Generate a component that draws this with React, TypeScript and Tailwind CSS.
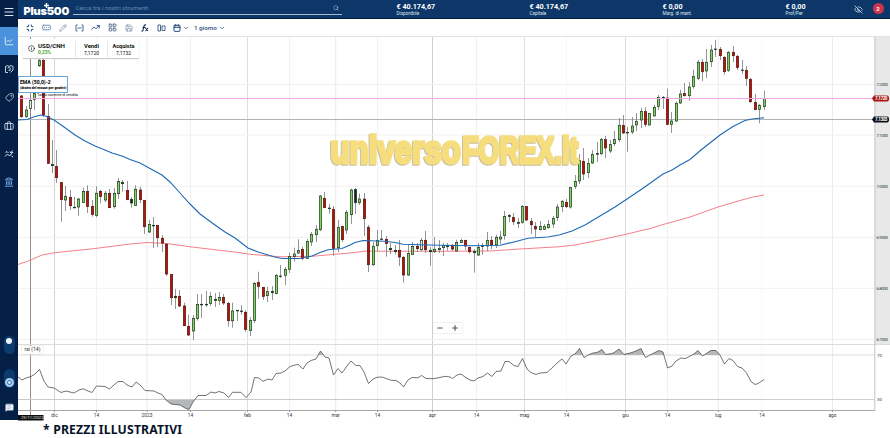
import type { FC } from 'react';
import {
  Briefcase,
  Calendar,
  ChartLine,
  ChevronDown,
  EyeOff,
  Info,
  Landmark,
  LayoutGrid,
  Menu,
  MessageSquareText,
  Minimize,
  Minus,
  Pencil,
  Plus,
  RectangleEllipsis,
  Save,
  Search,
  Tag,
  TrendingUp,
} from 'lucide-react';

// high, body top, body bottom, low, kind (g = up, r = down, k = flat, h = hollow)
type Candle = [number, number, number, number, string];

const candles: Candle[] = [
  [95, 95.7, 117, 118, 'r'], [106, 109.7, 116.7, 118, 'g'], [97, 100.3, 108.7, 118, 'h'], [85, 93.3, 99.7, 110, 'g'],
  [58, 60, 66, 67, 'g'], [55, 60, 115, 117, 'r'], [104, 116, 163.7, 164, 'r'], [140, 164, 166, 173, 'k'],
  [150, 166.3, 178, 183, 'r'], [182, 182.3, 200, 221.7, 'r'], [186, 196, 200.3, 211, 'g'], [190, 197, 206, 210, 'r'],
  [197, 207, 208, 208, 'k'], [198, 198.7, 207.3, 215.7, 'g'], [187.7, 191.3, 202.7, 203, 'g'], [185.3, 191.3, 206.7, 213, 'r'],
  [200, 206.3, 214.7, 216.7, 'r'], [186.3, 193, 215.7, 217.3, 'g'], [190, 191, 196.7, 203.3, 'r'], [191, 193, 200.3, 202, 'g'],
  [189, 193, 208, 208, 'r'], [188, 193, 207, 208.7, 'g'], [178, 181.3, 194, 198.7, 'g'], [180, 182, 184, 191.7, 'k'],
  [181, 190.3, 200, 200, 'r'], [197, 199, 203.3, 207.7, 'k'], [185.3, 189, 205.7, 206, 'g'], [186.7, 189.7, 200, 203, 'r'],
  [200, 200, 227, 234, 'r'], [220, 224.3, 232.3, 233, 'g'], [217, 225, 226, 248, 'k'], [225, 225, 238, 247, 'r'],
  [235, 238, 243.3, 252, 'r'], [243, 244, 274.3, 276, 'r'], [274, 274.3, 298, 305, 'r'], [289, 296, 298, 309, 'k'],
  [290, 296, 306.3, 307, 'r'], [302.7, 305.7, 326, 326, 'r'], [314.7, 326, 335.3, 336, 'r'], [315, 318, 331.3, 340, 'g'],
  [294, 304.3, 318.7, 320.7, 'g'], [294, 304, 305, 318, 'k'], [291, 304, 305, 307, 'k'], [292, 296, 303.7, 306, 'g'],
  [293, 299, 300.7, 307, 'k'], [292, 297.3, 300.7, 305, 'g'], [294, 297.3, 303.3, 305, 'r'], [302, 303.3, 321, 326.7, 'r'],
  [302.7, 310.7, 321, 327.7, 'g'], [310, 310, 311, 321, 'k'], [305, 310.7, 311.7, 314.7, 'k'], [310, 312, 329.7, 331.7, 'r'],
  [317, 320.3, 330.7, 336, 'g'], [282, 283.3, 320.7, 323, 'g'], [271.7, 282, 286.7, 298.7, 'r'], [287, 287, 296.7, 300, 'r'],
  [286.7, 291.3, 296, 302, 'g'], [286, 291, 293, 300, 'k'], [274, 275.3, 294, 294, 'g'], [265, 275.7, 276.7, 278, 'k'],
  [267, 269, 275.7, 285, 'g'], [252.7, 256.3, 269.7, 273, 'g'], [247.7, 253.7, 257, 261.7, 'g'], [239.3, 250.3, 253.3, 254, 'g'],
  [246.7, 249, 258.7, 260, 'r'], [239, 241.3, 258.7, 259, 'g'], [232, 234, 242.3, 246, 'g'], [225, 229.3, 235, 242, 'g'],
  [195, 195.7, 230, 231, 'g'], [192, 198, 208, 208, 'r'], [204, 207.7, 209, 213.7, 'k'], [206, 209, 248.7, 255.7, 'r'],
  [220, 227, 248, 252, 'g'], [226, 226, 240, 242, 'r'], [210, 212, 230.3, 234, 'g'], [188.7, 189.7, 215, 224, 'g'],
  [188, 189.3, 203, 214, 'k'], [193.7, 198.7, 203, 205, 'g'], [193, 198.7, 219, 236, 'r'], [225, 227, 265, 272, 'r'],
  [242, 246, 265, 266, 'g'], [230, 240, 246, 251, 'g'], [230, 238.7, 239.7, 240, 'k'], [236, 239, 243.7, 256.7, 'r'],
  [243, 248, 250, 254, 'k'], [245, 250, 252, 254.7, 'k'], [240, 250, 257.3, 266, 'r'], [256, 257.3, 275.3, 282.7, 'r'],
  [245, 253.3, 275.3, 276, 'g'], [242, 246, 254.7, 255, 'g'], [243, 246, 249, 252, 'r'], [238, 240, 250, 251, 'h'],
  [231, 240, 250, 253, 'r'], [247, 250, 252, 266, 'k'], [237, 249, 252, 253, 'g'], [240, 248, 250, 253, 'g'],
  [243, 245.3, 248, 256, 'g'], [243, 245.3, 247, 250.7, 'k'], [244, 245, 249.3, 251, 'r'], [239.7, 242.3, 251.3, 252, 'g'],
  [238.7, 240.3, 242.7, 243, 'g'], [239.7, 240.3, 246.3, 250, 'r'], [247, 247, 252, 253.7, 'r'], [249, 251.3, 253, 272.7, 'k'],
  [243, 247, 255.3, 256, 'g'], [243, 245.3, 246.7, 254.7, 'k'], [232, 240, 246.3, 251, 'g'], [236, 240, 245, 249, 'r'],
  [234.7, 237, 245.3, 248, 'g'], [231, 236.7, 239.3, 244, 'g'], [211, 216.3, 235.7, 239.7, 'g'], [214, 215.3, 216.7, 222, 'k'],
  [213, 217.3, 222, 225, 'r'], [218, 222, 223.7, 228, 'k'], [205, 206.3, 222.7, 223.7, 'g'], [206, 206.3, 220.3, 221, 'r'],
  [218, 221, 225, 234, 'r'], [222, 226, 229.3, 237, 'r'], [221, 226, 230, 230.5, 'g'], [224, 226.3, 229.7, 230, 'g'],
  [220, 224.3, 228, 228.5, 'g'], [216, 218, 224.3, 228, 'g'], [204, 206.7, 218, 221, 'g'], [200, 201, 207, 212, 'g'],
  [199, 202, 207, 208, 'r'], [187, 187.3, 207.3, 208.5, 'g'], [175, 181.3, 186.7, 189, 'g'], [154, 160.3, 181.3, 184, 'g'],
  [148, 161, 174.3, 180, 'r'], [158, 163.3, 173, 178, 'g'], [150, 154, 163.3, 164, 'g'], [142, 153.3, 154.3, 162, 'k'],
  [138, 139.3, 154, 155, 'g'], [136, 139.3, 148.3, 158, 'r'], [140, 144.3, 151.3, 153, 'g'], [131, 139.3, 144, 146, 'g'],
  [118, 125, 140, 142, 'g'], [115, 125.3, 133.3, 134, 'r'], [127, 132, 133.3, 151.7, 'k'], [117, 125.7, 132.3, 134, 'g'],
  [113, 121, 125.3, 131, 'g'], [108, 111.3, 120.3, 128, 'g'], [107, 111.3, 124.7, 127, 'r'], [113, 113.3, 125.3, 125.5, 'g'],
  [104.7, 107, 116.3, 116.5, 'g'], [95, 97, 106.7, 110, 'g'], [96, 97, 98, 109, 'k'], [88.7, 97.7, 124.7, 125, 'r'],
  [112, 120.7, 124.7, 133, 'g'], [101.7, 103, 121.3, 122, 'g'], [89.7, 93.7, 103.3, 104, 'g'], [83, 93.3, 96, 96.5, 'r'],
  [82, 86.7, 96, 101, 'g'], [69.7, 76, 86.7, 88.7, 'g'], [60, 62, 78.7, 80, 'g'], [59, 62, 72, 81, 'r'],
  [49, 62, 71.3, 78, 'g'], [45, 49.7, 62, 67, 'g'], [40, 48.7, 49.7, 57, 'k'], [47, 49, 56, 60, 'r'],
  [56, 57, 72, 74.7, 'r'], [51, 52, 70.7, 72, 'g'], [46, 52, 56, 62, 'r'], [55, 56, 67.7, 70, 'r'],
  [60, 69.7, 70.7, 74, 'k'], [66, 70, 78.7, 86, 'r'], [78, 79, 102, 103, 'r'], [93.7, 102, 110, 110, 'r'],
  [104, 105, 109.7, 123.3, 'g'], [90.7, 98.3, 107, 110, 'g'],
];

const fills: Record<string, string> = { g: '#83d45f', r: '#b01505', k: '#1c1f26', h: '#e8efe6' };

const emaFast =
  '18,120 27,119.5 35,116.5 41,115 47,116.5 54,120 64,127 75,135 85,141 95,146 105,150 112,153 122,156 130,159.5 140,163 150,168.5 162,175 170,182 180,193 190,204 200,214 215,225 225,232 235,238 248,248 258,252 268,255 275,257 282,258.5 300,258.5 312,256 320,252.5 328,249.7 342,248.5 350,245 355,242.5 363,240.5 385,241.3 395,242.5 403,244.3 420,244.7 440,245.3 472,245.7 500,245.3 515,241.7 528,238.3 548,237 560,234.7 572,231 585,225 600,216 615,207 627,199 643,188.3 663,174 672,170 680,165 690,159.5 701,150 720,135 733,126.5 745,120.5 752,119 764,117.7';

const emaSlow =
  '18,264.5 30,260.3 42,255 55,252.7 95,248.5 130,244 147,242.5 168,243.7 192,247 240,252.7 250,254.3 280,256.8 312,256.3 335,254.3 355,252.5 366,251 380,251.2 440,251.3 490,251 520,249 560,246.7 575,245 600,240 625,234.5 650,228.5 665,224 690,217 718,207 740,200.5 753,197 764,195';

const rsi =
  '18,377 22,380 26,378 31,376.5 35,374 39.5,369.5 44,381 48,387 54,388 61,392.5 66,391 74,393 79,390 83,388.7 88,391 92,392.5 96.5,386 105,386.5 109.5,389 118,381.5 123,381.5 127,385 132,387 136,382 140,385 145,390.5 154,391 158,393 162,394.5 166,400 171,404 180,405 185,408 189,409.5 193,402 198,395.5 206,395.5 211,392 215,393 219,391.5 224,393 228.5,397.5 232.5,392.3 241,392.3 246,397.5 251,392 254.5,377.5 259,378 263,381.3 268,379 272,380 276,373.5 281,373 285,371 290,366.5 298,364.3 303,369 307,363 311,360.5 316,359 320.5,351 325,357 329,358 333.5,375 338,368.5 342,373 347,366 351,361 356,365.5 360,365.5 364,372 368.5,383.5 373,379 377,377.3 382,377 391,380.3 396,380.5 400,383 403.5,387 408,380 412,377.5 418,377.7 421.5,375.5 426,378.5 433,378.7 439,377.7 445,376.3 450,377 452.5,378.5 457,375 461,374 465,377 470,380 474,381 478,378 483,376.5 487.5,373 492,376.5 496,371.5 501,371 505,361.5 509,361.5 514,365.5 518,366.5 522.5,358.5 527,369 531,372.5 536,374.5 540,373 547,372.5 553,367 557,363 562,359 566,364 571,356 575,354 579.5,348.5 584,357.5 588,355 593,353 597,352.5 602,349.5 605.5,354.5 612,353.5 615,352 619,349 624,354.5 632,352.5 637,350.5 641,348.5 645.5,357.5 650,355 654,353 659,350.5 663,352 667.5,368 672,366 676,361 681,358 685,358.7 694,354 698,350.5 702.5,356 711,350.5 716,350.5 720,355 724.5,364 729,358.5 733,360.5 737.5,366.5 742,368 746.5,373 751,381.5 755,384.5 758,383.5 764,379.5';

const months: [number, string, string][] = [
  [54.5, 'dic', '#d4d4d4'], [96.5, '14', '#f1f1f1'], [147, '2023', '#ebebeb'], [190.5, '14', '#f1f1f1'],
  [247.5, 'feb', '#dedede'], [289.5, '14', '#f1f1f1'], [335.7, 'mar', '#ebebeb'], [377.5, '14', '#f1f1f1'],
  [432.5, 'apr', '#cfcfcf'], [476.5, '14', '#f1f1f1'], [524.5, 'mag', '#dedede'], [566.5, '14', '#f6f6f6'],
  [625.5, 'giu', '#dedede'], [667.5, '14', '#f1f1f1'], [718.3, 'lug', '#ebebeb'], [762, '14', '#f9f9f9'],
  [832.5, 'ago', '#ebebeb'],
];

const prices: [number, string][] = [
  [84.5, '7.2000'], [135, '7.1000'], [186.3, '7.0000'], [237.3, '6.9000'], [288.3, '6.8000'], [339.5, '6.7000'],
];

const stats: [string, string, string][] = [
  ['€ 40.174,67', 'Disponibile', 'w-[133px]'],
  ['€ 40.174,67', 'Capitale', 'w-[133px]'],
  ['€ 0,00', 'Marg. di mant.', 'w-[123px]'],
  ['€ 0,00', 'Prof/Per', 'w-[68px]'],
];

const Sidebar: FC = () => (
  <nav className="flex h-[420px] w-[18px] shrink-0 flex-col items-center bg-[#042047] text-[#d7e3f1]">
    <div className="flex h-[27px] w-full items-center justify-center pb-1">
      <Menu size={12} strokeWidth={2} />
    </div>
    <div className="flex h-7 w-full items-center justify-center bg-[#4b92dc] text-white">
      <ChartLine size={10} strokeWidth={1.8} />
    </div>
    <div className="flex h-7 items-center">
      <svg width="10" height="10" viewBox="0 0 20 20" fill="none" stroke="currentColor" strokeWidth="1.8">
        <path d="M8 17H3V5l4-2 3 2 4-2 4 2v7l-5 5M7 8l3-1 3 2-2 4M13 12l-2 2-2-2" />
      </svg>
    </div>
    <div className="flex h-7 items-center">
      <Tag size={9} className="rotate-90" />
    </div>
    <div className="flex h-[29px] items-center">
      <Briefcase size={10} />
    </div>
    <div className="flex h-7 items-center">
      <svg width="10" height="10" viewBox="0 0 20 20" fill="none" stroke="currentColor" strokeWidth="2">
        <path d="M2 15l5-5 4 4 7-8M3 7l3-2 3 3M12 5l2 3 3-5M15 14l3 2" />
      </svg>
    </div>
    <div className="flex h-7 items-center text-[#6fa8e6]">
      <Landmark size={10} strokeWidth={2.4} />
    </div>
    <div className="mt-auto flex h-[18px] w-[11px] justify-center rounded-full bg-[#0c3b70] pt-[2px]">
      <span className="h-[6px] w-[6px] rounded-full bg-[#f2f6fa]" />
    </div>
    <div className="mt-[15px] flex h-[19px] w-[11px] items-end justify-center rounded-full bg-[#0c3b70] pb-px">
      <span className="flex h-[9px] w-[9px] items-center justify-center rounded-full bg-[#a9cdf0]">
        <span className="h-[5px] w-[5px] rounded-full border border-[#2d6cae] bg-[#d8e8f6]" />
      </span>
    </div>
    <div className="mt-[15px] mb-[8px]">
      <MessageSquareText size={9} fill="#fff" stroke="#9fb6d0" />
    </div>
  </nav>
);

const Header: FC = () => (
  <header className="flex h-[19px] shrink-0 items-start border-b border-[#05183a] bg-[#0c3768] text-white">
    <div className="relative ml-[5.5px] w-[49px] pt-[4px]">
      <span className="block font-[Inter] text-[11px] leading-[14px] font-black tracking-[-0.22px]">Plus500</span>
      <svg className="absolute top-[3px] left-[20px]" width="5" height="5" viewBox="0 0 5 5">
        <path d="M2.5 0v5M0 2.5h5" stroke="#fff" strokeWidth="1.4" />
      </svg>
    </div>
    <div className="flex h-[15px] w-[269px] items-center justify-between border-b border-[#a9bccb] pt-[2px] pr-[3px] pl-[3px]">
      <span className="text-[6.2px] leading-[8px] text-[#6389ab]">Cerca tra i nostri strumenti</span>
      <Search size={6} className="text-[#c4d3e2]" />
    </div>
    <div className="ml-[55px] flex pt-[2px]">
      {stats.map(([value, label, width]) => (
        <div key={label} className={width}>
          <div className="text-[7.2px] leading-[9px] font-bold">{value}</div>
          <div className="text-[4.6px] leading-[5px] text-[#dfe8f1]">{label}</div>
        </div>
      ))}
    </div>
    <EyeOff size={9} className="mt-[5px] text-[#d7e3f1]" />
    <span className="mt-[3px] ml-[10px] flex h-[11px] w-[11px] items-center justify-center rounded-full bg-[#d0334f] text-[6px] leading-none font-bold">
      2
    </span>
  </header>
);

const Toolbar: FC = () => (
  <div className="flex h-[18px] shrink-0 items-center border-b border-[#e2e2e2] bg-white pl-[4px] text-[#1f4a7d] [&>span]:flex [&>span]:w-[16.4px] [&>span]:justify-center">
    <span>
      <Minimize size={8} strokeWidth={3} />
    </span>
    <span>
      <RectangleEllipsis size={9} stroke="#5b83ae" strokeWidth={2.4} />
    </span>
    <span>
      <Pencil size={8} stroke="#6b84a0" />
    </span>
    <span>
      <svg width="9" height="8" viewBox="0 0 18 16" fill="none" stroke="#46688f" strokeWidth="2">
        <path d="M5 2H2v12h3M13 2h3v12h-3M5 10l3-3 2 2 3-3" />
      </svg>
    </span>
    <span>
      <TrendingUp size={9} strokeWidth={2.4} />
    </span>
    <span>
      <LayoutGrid size={9} stroke="#4c6787" strokeWidth={2.4} />
    </span>
    <span>
      <Save size={8} stroke="#6b84a0" />
    </span>
    <span>
      <svg width="8" height="8" viewBox="0 0 16 16" fill="none" stroke="#0a2c5a" strokeWidth="2.2">
        <path d="M1 14c3 1 3-1 4-6s2-7 5-6M3 7h6M9 8l5 6M14 8l-5 6" />
      </svg>
    </span>
    <span>
      <svg width="9" height="8" viewBox="0 0 18 16" fill="none" stroke="#46688f" strokeWidth="2">
        <path d="M2 2h5v12H2zM10 4h6v9h-6z" />
      </svg>
    </span>
    <div className="ml-[3px] flex items-center gap-[2px]">
      <Calendar size={8} strokeWidth={3} />
      <ChevronDown size={6} strokeWidth={3} />
    </div>
    <div className="ml-[5.5px] flex items-center gap-[2px]">
      <span className="text-[6.2px] leading-[8px] font-medium">1 giorno</span>
      <ChevronDown size={6} strokeWidth={3} />
    </div>
  </div>
);

const Chart: FC = () => (
  <svg width="872" height="384" viewBox="18 37 872 384" className="block">
    <defs>
      <clipPath id="over">
        <rect x="18" y="340" width="760" height="15" />
      </clipPath>
      <clipPath id="under">
        <rect x="18" y="399.5" width="760" height="11" />
      </clipPath>
    </defs>

    {/* Grid */}
    {months.map(([x, , color]) => (
      <path key={x} d={`M${x} 37V410`} stroke={color} />
    ))}
    {prices.map(([y]) => (
      <path key={y} d={`M18 ${y}H874`} stroke="#f1f1f1" />
    ))}
    <path d="M30.5 37V415" stroke="#8f8f8f" />
    <path d="M18 344.5H890M18 355H874" stroke="#dcdcdc" />
    <path d="M18 399.5H874" stroke="#d0d0d0" />
    <path d="M18 410.5H875" stroke="#a8a8a8" />

    <polyline points={emaSlow} fill="none" stroke="#f4808a" strokeWidth="1" />
    <path d="M18 119.5H873" stroke="#b3b3b3" />

    {/* Candles */}
    {candles.map(([high, top, bottom, low, kind], i) => {
      const x = Math.floor(21.8 + i * 4.392) + 0.5;
      return (
        <g key={i}>
          <path d={`M${x} ${high}V${low}`} stroke="#77797c" strokeWidth="0.8" />
          <rect
            x={x - 1.15}
            y={top + 0.3}
            width="2.3"
            height={Math.max(bottom - top - 0.6, 0.6)}
            fill={fills[kind]}
            stroke={kind === 'r' ? '#5a1512' : '#1d3a20'}
            strokeWidth="0.7"
          />
        </g>
      );
    })}
    <polyline points={emaFast} fill="none" stroke="#1d69b5" strokeWidth="1.1" />
    <path d="M18 98.5H873" stroke="#f3a6e6" />

    {/* RSI */}
    <polygon points={`18,355 ${rsi} 764,355`} fill="#b4b8b8" clipPath="url(#over)" />
    <polygon points={`18,399.5 ${rsi} 764,399.5`} fill="#b4b8b8" clipPath="url(#under)" />
    <polyline points={rsi} fill="none" stroke="#4c4f52" strokeWidth="0.8" />

    {/* Watermark */}
    <g
      fontFamily="Liberation Sans"
      fontWeight="700"
      fill="#f6dd7d"
      stroke="#f6dd7d"
      strokeWidth="3.4"
      strokeLinejoin="miter"
      strokeMiterlimit="2"
      className="drop-shadow-[-1px_1px_0_#c9bfa6]"
    >
      <text x="330.5" y="163" fontSize="39" textLength="130.5" lengthAdjust="spacingAndGlyphs">universo</text>
      <text x="462.5" y="163" fontSize="36" textLength="116" lengthAdjust="spacingAndGlyphs">FOREX.it</text>
    </g>

    {/* Axes */}
    <rect x="874" y="37" width="16" height="307" fill="#e8e8e8" />
    <rect x="874" y="37" width="2" height="307" fill="#d9d9d9" />
    <path d="M874.8 344V411" stroke="#c4c4c4" />
    <g fontFamily="Roboto" fontSize="4.4" fill="#333">
      {prices.map(([y, label]) => (
        <text key={y} x="876.5" y={y + 1.6} textLength="11.5">{label}</text>
      ))}
      <text x="877" y="356.6">70</text>
      <text x="877" y="401.1">30</text>
      {months.map(([x, label]) => (
        <text key={x} x={x} y="416.8" fontSize="4.8" textAnchor="middle">{label}</text>
      ))}
    </g>
    {months.map(([x]) => (
      <path key={x} d={`M${x} 410V412`} stroke="#999" />
    ))}
    <path d="M872 98.5l2-3h13q2 0 2 3t-2 3h-13z" fill="#a8160f" />
    <path d="M872 119.5l2-3h13q2 0 2 3t-2 3h-13z" fill="#0b0d18" />
    <g fontFamily="Roboto" fontSize="4.6" fontWeight="700" fill="#fff">
      <text x="875" y="100.2" textLength="12.5">7.1720</text>
      <text x="875" y="121.2" textLength="12.5">7.1303</text>
    </g>
    <rect x="18" y="415" width="25.5" height="5.5" fill="#0c0f10" />
    <text x="21" y="419.3" fontFamily="Roboto" fontSize="4.2" fill="#e8e8e8">29/11/2022</text>
    <text x="37" y="95.8" fontFamily="Roboto" fontSize="4" fill="#222" textLength="41">Tasso corrente di vendita</text>
  </svg>
);

const App: FC = () => {
  return (
    <div className="flex h-[438px] w-[890px] overflow-hidden bg-white font-[Roboto,sans-serif]">
      <Sidebar />
      <div className="flex min-w-0 flex-1 flex-col">
        <Header />
        <Toolbar />
        <main className="relative shrink-0">
          <Chart />

          {/* Quote */}
          <div className="absolute top-[2px] left-[5px] flex h-[19px] w-[116px] items-center bg-white text-[#111] shadow-[0_1px_1px_#ccc]">
            <Info size={7} className="ml-[5px]" strokeWidth={2} />
            <div className="ml-[3px] flex h-full w-[37px] flex-col justify-center pt-px">
              <span className="text-[6.2px] leading-[7px] font-bold">USD/CNH</span>
              <span className="text-[4.8px] leading-[6px] font-bold text-[#4ca92c]">0,23%</span>
            </div>
            <div className="flex h-[16px] w-[32px] flex-col items-center justify-center border-l border-[#e6e6e6] pt-px">
              <span className="text-[5.8px] leading-[7px] font-bold">Vendi</span>
              <span className="text-[5px] leading-[6px]">7,1720</span>
            </div>
            <div className="flex h-[16px] flex-1 flex-col items-center justify-center border-l border-[#e6e6e6] pt-px">
              <span className="text-[5.6px] leading-[7px] font-bold">Acquista</span>
              <span className="text-[5px] leading-[6px]">7,1732</span>
            </div>
          </div>

          {/* Indicator tooltip */}
          <div className="absolute top-[39px] left-0 flex h-[17px] w-[50px] flex-col justify-between border border-[#6ea6d8] bg-white px-px py-[1.5px] text-black">
            <span className="text-[5.1px] leading-[6px] font-bold">EMA (50,0)-2</span>
            <span className="text-[3.4px] leading-[5px] font-black whitespace-nowrap">(destro del mouse per gestire)</span>
          </div>

          {/* RSI label */}
          <div className="absolute top-[308.5px] left-[4px] flex h-[8px] w-[21px] items-center justify-center bg-white text-[5px] leading-none text-[#222] shadow-[0_0_1px_#aaa]">
            rsi (14)
          </div>

          {/* Zoom */}
          <div className="absolute top-[286px] left-[415px] flex h-[10px] w-[29px] items-center justify-around bg-white text-[#555] shadow-[0_0_1px_#aaa]">
            <Minus size={8} strokeWidth={3.4} />
            <Plus size={8} strokeWidth={3.4} />
          </div>
        </main>
        <p className="mt-px ml-[25px] font-['Noto_Sans'] text-[12.2px] leading-[15px] font-bold tracking-[0.18px] whitespace-nowrap text-[#07142b]">
          * PREZZI ILLUSTRATIVI
        </p>
      </div>
    </div>
  );
};

export default App;
